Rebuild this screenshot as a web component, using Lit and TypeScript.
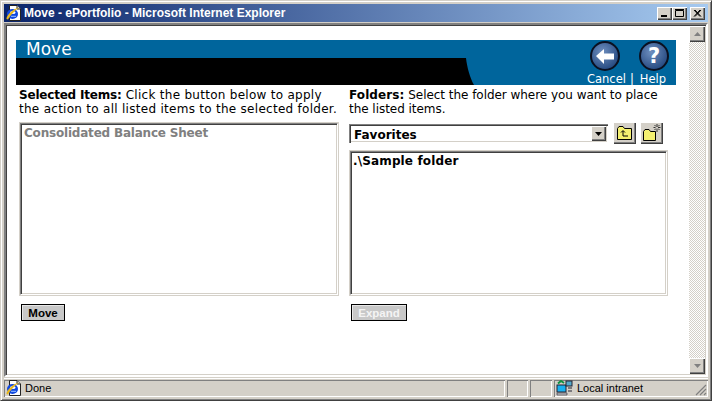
import { LitElement, html, css, svg } from "lit";
import { customElement } from "lit/decorators.js";

const ieIcon = (size: number) => html`<svg width=${size} height=${size} viewBox="0 0 16 16">
  <path d="M3.5 .5H11L14.5 4V15.5H3.5Z" fill="#fff" stroke="#222"/>
  <path d="M11 .5V4H14.5" fill="#ddd" stroke="#222"/>
  <ellipse cx="6.5" cy="9" rx="5.5" ry="5" fill="#1048e0"/>
  <ellipse cx="6.8" cy="7.6" rx="2.8" ry="1.5" fill="#fff"/>
  <path d="M5 10.8H10V11.8H5Z" fill="#9cc4ff"/>
  <path d="M.5 14C0 11 7 3.5 13 2.5C11 4 5 9 2 14.5Z" fill="#e8b820"/>
</svg>`;

const arrowBadge = svg`<path d="M4 13 12 6V10.5H22V16.5H12V21Z" fill="#fff"/>`;

@customElement("app-root")
export class AppRoot extends LitElement {
  static styles = css`
    :host { display: block; width: 712px; height: 401px; overflow: hidden; background: #d4d0c8; font-family: "DejaVu Sans", Verdana, sans-serif; color: #000; }
    * { box-sizing: border-box; }
    .window { width: 712px; height: 401px; display: flex; flex-direction: column; border: 1px solid; border-color: #d4d0c8 #404040 #404040 #d4d0c8; box-shadow: inset 1px 1px 0 #fff, inset -1px -1px 0 #808080; padding: 3px; }
    .title { flex: none; height: 18px; display: flex; align-items: center; gap: 2px; padding: 0 3px 0 2px; background: linear-gradient(90deg, #0a246a, #a6caf0); color: #fff; font: bold 12px "Liberation Sans", sans-serif; white-space: nowrap; }
    .title-text { flex: 1; }
    .ctls { display: flex; align-items: center; }
    .ctl { width: 15px; height: 13px; background: #d4d0c8; box-shadow: inset 1px 1px 0 #fff, inset -1px -1px 0 #404040, inset -2px -2px 0 #808080; display: block; }
    .ctl.close { margin-left: 3px; }
    .client { flex: none; height: 354px; margin-top: 1px; display: flex; border: 2px solid; border-color: #808080 #fff #fff #808080; box-shadow: inset 1px 1px 0 #404040, inset -1px -1px 0 #d4d0c8; padding: 1px; }
    .page { flex: 1; background: #fff; padding: 14px 13px 0 9px; min-width: 0; }
    .scroll { flex: none; width: 16px; background-color: #fff; background-image: repeating-conic-gradient(#d4d0c8 0 25%, #fff 0 50%); background-size: 2px 2px; display: flex; flex-direction: column; justify-content: space-between; }
    .sbtn { width: 16px; height: 16px; background: #d4d0c8; box-shadow: inset 1px 1px 0 #fff, inset -1px -1px 0 #404040, inset -2px -2px 0 #808080; display: flex; align-items: center; justify-content: center; }
    .banner { height: 45px; background: #00659c; color: #fff; display: grid; grid-template-columns: 1fr auto; overflow: hidden; }
    .bleft { display: flex; flex-direction: column; min-width: 0; }
    .heading { height: 18px; padding-left: 10px; font-size: 17px; line-height: 19px; font-weight: 400; }
    .band { height: 27px; display: block; }
    .actions { display: flex; flex-direction: column; width: 92px; padding-top: 1px; align-items: stretch; }
    .icons { display: flex; gap: 19px; padding: 0 0 0 6px; height: 30px; }
    .round { width: 30px; height: 30px; border-radius: 50%; background: radial-gradient(circle at 40% 35%, #6f8fbf, #24487f 80%); border: 2px solid #0a1020; display: flex; align-items: center; justify-content: center; color: #fff; font: bold 21px/1 "DejaVu Sans", sans-serif; }
    .links { display: flex; font-size: 11.5px; line-height: 14px; white-space: nowrap; color: #fff; margin-top: 1px; padding-left: 3px; }
    .sep { margin: 0 6px 0 4px; }
    .cols { display: grid; grid-template-columns: 330px 330px; margin-top: 3px; }
    .intro { font-size: 12px; line-height: 14px; height: 33px; padding-left: 3px; white-space: nowrap; letter-spacing: .28px; }
    .intro b { letter-spacing: -.2px; }
    .intro.tight { letter-spacing: -.04px; }
    .intro.tight b { letter-spacing: .1px; }
    .list { border: 2px solid; border-color: #808080 #fff #fff #808080; outline: 1px solid #d4d0c8; outline-offset: -1px; box-shadow: inset 1px 1px 0 #404040, inset -1px -1px 0 #d4d0c8; background: #fff; font-size: 12px; font-weight: 700; line-height: 14px; }
    .list.left { width: 320px; height: 174px; margin: 1px 0 0 3px; color: #808080; letter-spacing: -.2px; padding: 2px 3px; }
    .list.right { width: 319px; height: 146px; margin: 6px 0 0 3px; padding: 2px; letter-spacing: .14px; }
    .picker { display: flex; align-items: center; gap: 5px; padding-left: 3px; height: 23px; }
    .select { width: 259px; height: 19px; margin-top: 2px; background: #fff; box-shadow: inset 1px 1px 0 #808080, inset 2px 2px 0 #404040, inset -1px -1px 0 #fff, inset -2px -2px 0 #d4d0c8; display: flex; align-items: center; justify-content: space-between; padding: 2px 2px 2px 5px; font-size: 12px; font-weight: 700; }
    .select-label { position: relative; top: 1px; }
    .drop { width: 15px; height: 15px; background: #d4d0c8; box-shadow: inset 1px 1px 0 #fff, inset -1px -1px 0 #404040, inset -2px -2px 0 #808080; display: flex; align-items: center; justify-content: center; }
    .tool { width: 23px; height: 22px; background: #d4d0c8; box-shadow: inset 1px 1px 0 #fff, inset -1px -1px 0 #404040, inset -2px -2px 0 #808080; display: flex; align-items: center; justify-content: center; }
    .tool + .tool { margin-left: -1px; }
    .footer { margin-top: 8px; height: 17px; padding-left: 5px; }
    .btn { display: flex; align-items: center; justify-content: center; height: 17px; background: #c8c8c8; border: 1px solid #000; box-shadow: inset 1px 1px 0 #e8e8e8; font: 700 11.5px "Liberation Sans", Arial, sans-serif; padding: 0; }
    .btn.move { width: 44px; }
    .btn.expand { width: 56px; color: #f4f4f4; }
    .status { flex: 1; min-height: 0; margin-top: 1px; display: grid; grid-template-columns: 501px 21px 22px 1fr; gap: 2px; font: 11px "Liberation Sans", sans-serif; border-top: 1px solid #fff; padding-top: 1px; }
    .cell { box-shadow: inset 1px 1px 0 #808080, inset -1px -1px 0 #fff; display: flex; align-items: center; gap: 3px; padding: 0 2px 1px; white-space: nowrap; min-width: 0; position: relative; }
    .zone { gap: 4px; }
    .grip { position: absolute; right: 1px; bottom: 1px; }
  `;

  render() {
    return html`<div class="window">
      <div class="title">
        ${ieIcon(16)}
        <span class="title-text">Move - ePortfolio - Microsoft Internet Explorer</span>
        <div class="ctls">
          <span class="ctl"><svg width="15" height="13"><rect x="4" y="8" width="6" height="2" fill="#000"/></svg></span>
          <span class="ctl"><svg width="15" height="13"><path d="M3.5 3.5H11.5V9.5H3.5Z M3 2.5H12" fill="none" stroke="#000"/></svg></span>
          <span class="ctl close"><svg width="15" height="13"><path d="M4 3 10 9.5M5 3 11 9.5M10 3 4 9.5M11 3 5 9.5" stroke="#000"/></svg></span>
        </div>
      </div>
      <div class="client">
        <div class="page">
          <div class="banner">
            <div class="bleft">
              <div class="heading">Move</div>
              <svg class="band" width="568" height="27" viewBox="0 0 568 27"><path d="M0 0H450C451 9 454 20 458 27H0Z" fill="#000"/></svg>
            </div>
            <div class="actions">
              <div class="icons">
                <span class="round"><svg width="26" height="26" viewBox="0 0 26 26">${arrowBadge}</svg></span>
                <span class="round">?</span>
              </div>
              <div class="links"><span>Cancel</span><span class="sep">|</span><span>Help</span></div>
            </div>
          </div>
          <div class="cols">
            <div>
              <div class="intro"><b>Selected Items:</b> Click the button below to apply<br>the action to all listed items to the selected folder.</div>
              <div class="list left">Consolidated Balance Sheet</div>
            </div>
            <div>
              <div class="intro tight"><b>Folders:</b> Select the folder where you want to place<br>the listed items.</div>
              <div class="picker">
                <div class="select"><span class="select-label">Favorites</span><span class="drop"><svg width="7" height="4"><path d="M0 0H7L3.5 4Z" fill="#000"/></svg></span></div>
                <span class="tool"><svg width="17" height="16" viewBox="0 0 17 16"><path d="M1.5 14.5V3.5L3 1.5H7L8.5 3.5H15.5V14.5Z" fill="#f4f070" stroke="#000"/><path d="M7 6V11H12M5 7.5 7 5.5 9 7.5" fill="none" stroke="#000"/></svg></span>
                <span class="tool"><svg width="19" height="18" viewBox="0 0 19 18"><path d="M1.5 16.5V7.5L3 5.5H7L8.5 7.5H13.5V16.5Z" fill="#f4f070" stroke="#000"/><path d="M15 0V3M15 5V8M11.5 3.5H13.5M16 3.5H18.5M12.5 1 14 2.5M17.5 1 16 2.5M12.5 6 14 4.5M17.5 6 16 4.5" stroke="#333"/></svg></span>
              </div>
              <div class="list right">.\\Sample folder</div>
            </div>
            <div class="footer"><div class="btn move">Move</div></div>
            <div class="footer"><div class="btn expand">Expand</div></div>
          </div>
        </div>
        <div class="scroll">
          <span class="sbtn"><svg width="7" height="4"><path d="M3.5 0 7 4H0Z" fill="#808080"/></svg></span>
          <span class="sbtn"><svg width="7" height="4"><path d="M0 0H7L3.5 4Z" fill="#808080"/></svg></span>
        </div>
      </div>
      <div class="status">
        <div class="cell">${ieIcon(16)}<span>Done</span></div>
        <div class="cell"></div>
        <div class="cell"></div>
        <div class="cell zone">
          <svg width="17" height="16" viewBox="0 0 17 16"><rect x="1" y="5" width="9" height="7" fill="#18b0f0" stroke="#223"/><rect x="10" y="1" width="6" height="5" fill="#5ac" stroke="#223"/><path d="M1 13H11V15H1Z" fill="#ccc" stroke="#223" stroke-width=".6"/><path d="M12 8H16M12 11H16" stroke="#223"/><path d="M2 3.5 5 1 8 3" fill="none" stroke="#109040" stroke-width="2"/></svg>
          <span>Local intranet</span>
          <svg class="grip" width="12" height="12"><path d="M11 1 1 11M11 5 5 11M11 9 9 11" stroke="#808080" stroke-width="1.2"/></svg>
        </div>
      </div>
    </div>`;
  }
}
